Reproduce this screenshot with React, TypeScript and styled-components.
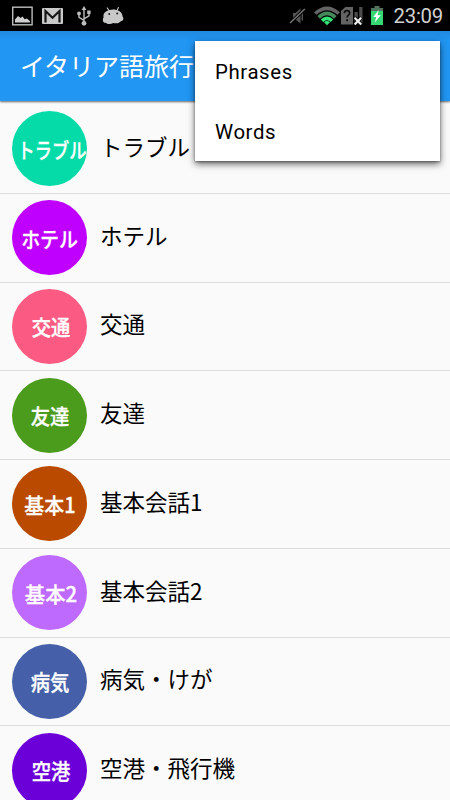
import React from 'react';
import styled, { createGlobalStyle } from 'styled-components';

const GlobalStyle = createGlobalStyle`
  * { box-sizing: border-box; }
  html, body { margin: 0; height: 800px; overflow: hidden; background: #fafafa; }
`;

const Screen = styled.div`
  position: relative;
  display: flex;
  flex-direction: column;
  width: 450px;
  height: 800px;
  overflow: hidden;
  background: #fafafa;
  color: #000;
  font-family: Roboto, 'Noto Sans CJK JP', sans-serif;
`;

const StatusBar = styled.header`
  display: flex;
  flex: none;
  justify-content: space-between;
  height: 31px;
  padding: 0 7px 0 12px;
  background: #000;
`;

const StatusGroup = styled.div`
  display: flex;
  align-items: center;
`;

const StatusIcon = styled.svg<{ $gap?: number }>`
  display: block;
  flex: none;
  margin-right: ${(p) => p.$gap ?? 0}px;
`;

const Clock = styled.time`
  padding-top: 2px;
  color: #d2d2d2;
  font-size: 20.3px;
  line-height: 31px;
  letter-spacing: -0.2px;
`;

const AppBar = styled.div`
  position: relative;
  display: flex;
  flex: none;
  align-items: center;
  height: 70px;
  padding: 0 0 3px 20px;
  background: linear-gradient(#2289df, #2196f3 10px);
  box-shadow: 0 1px 2px rgba(0, 0, 0, 0.6);
`;

const Title = styled.h1`
  margin: 0;
  color: #fff;
  font-family: 'Noto Sans CJK JP', sans-serif;
  font-size: 25px;
  font-weight: 400;
  line-height: 36px;
  white-space: nowrap;
`;

const List = styled.ul`
  flex: none;
  margin: 0;
  padding: 4px 0 0;
  list-style: none;
`;

const Row = styled.li`
  display: flex;
  align-items: center;
  height: 88.75px;
  padding: 0 12px;
  border-bottom: 1px solid #dcdcdc;
`;

const Badge = styled.div<{ $color: string }>`
  display: flex;
  flex: none;
  align-items: center;
  justify-content: center;
  width: 75px;
  height: 75px;
  margin-right: 13px;
  border-radius: 50%;
  background: ${(p) => p.$color};
`;

const BadgeLabel = styled.span<{ $stretch: number; $shift: number }>`
  color: #fff;
  font-family: 'Noto Sans CJK JP', sans-serif;
  font-size: 21px;
  font-weight: 500;
  line-height: 24px;
  white-space: nowrap;
  -webkit-text-stroke: 0.3px #fff;
  transform: translate(${(p) => p.$shift}px, 0) scaleX(${(p) => p.$stretch});
`;

const RowLabel = styled.span`
  padding-bottom: 6px;
  font-family: 'Noto Sans CJK JP', sans-serif;
  font-size: 22.5px;
  line-height: 32px;
  white-space: nowrap;
`;

const Menu = styled.div`
  position: absolute;
  top: 41px;
  left: 195px;
  width: 245px;
  height: 120px;
  background: #fff;
  box-shadow: 0 3px 7px rgba(0, 0, 0, 0.6), 0 1px 2px rgba(0, 0, 0, 0.35);
`;

const MenuItem = styled.div`
  display: flex;
  align-items: center;
  height: 60px;
  padding: 2px 20px 0;
  font-size: 20.4px;
  letter-spacing: 0.6px;
`;

type Category = { badge: string; label: string; color: string; stretch: number; shift?: number };

const categories: Category[] = [
  { badge: 'トラブル', label: 'トラブル', color: '#04dba8', stretch: 0.82, shift: 2 },
  { badge: 'ホテル', label: 'ホテル', color: '#bf00ff', stretch: 0.9 },
  { badge: '交通', label: '交通', color: '#fb5b82', stretch: 0.92, shift: 1 },
  { badge: '友達', label: '友達', color: '#4b9b1d', stretch: 0.92 },
  { badge: '基本1', label: '基本会話1', color: '#b94a00', stretch: 0.95 },
  { badge: '基本2', label: '基本会話2', color: '#bf6aff', stretch: 0.97, shift: 1 },
  { badge: '病気', label: '病気・けが', color: '#4560a8', stretch: 0.92 },
  { badge: '空港', label: '空港・飛行機', color: '#6c00d8', stretch: 0.92, shift: 1 },
];

function PictureIcon() {
  return (
    <StatusIcon $gap={9} width="21" height="20" viewBox="0 0 21 20">
      <rect x="0.7" y="1.2" width="19.4" height="17.6" fill="none" stroke="#bdbdbd" strokeWidth="1.4" />
      <path d="M3 16.5v-3l3-3.4 2.5 2 2-1.5 2.2 2.6 2.2-.6 3 2.5v1.4z" fill="#cfcfcf" />
    </StatusIcon>
  );
}

function MailIcon() {
  return (
    <StatusIcon $gap={14} width="21" height="16" viewBox="0 0 21 16">
      <rect width="21" height="16" rx="1" fill="#c9c9c9" />
      <path d="M3.5 14.5V3l7 6.7 7-6.7v11.5" fill="none" stroke="#161616" strokeWidth="2.2" />
    </StatusIcon>
  );
}

function UsbIcon() {
  return (
    <StatusIcon $gap={11} width="14" height="20" viewBox="0 0 14 20">
      <g fill="none" stroke="#bdbdbd" strokeWidth="1.4">
        <path d="M7 3v14M2 8v3.3l5 3M12 6.5v3.3l-5 3" />
      </g>
      <path d="M7 0l2.4 4H4.6zM10.2 4.5h3.4V8h-3.4z" fill="#bdbdbd" />
      <circle cx="2" cy="7.4" r="1.9" fill="#bdbdbd" />
      <circle cx="7" cy="17.3" r="2.4" fill="#bdbdbd" />
    </StatusIcon>
  );
}

function AndroidIcon() {
  return (
    <StatusIcon width="22" height="18" viewBox="0 0 22 18">
      <path d="M5.3 1l2 3M16.3 0.6l-1.2 3" stroke="#c2c2c2" strokeWidth="1.2" strokeLinecap="round" />
      <path d="M1.6 10.5C.4 5 6 2.5 11 2.4c5 0 9.4 2.6 9.6 7 1.4 1.4.8 5-1.5 4.6-2 2.6-5 2.6-7.8 2-2.6 1.6-6 1.2-7.7-.2-2.2.8-3.8-3-2-5.3z" fill="#c8c8c8" />
      <circle cx="7.2" cy="7" r="1" fill="#222" />
      <circle cx="15.2" cy="6.6" r="1" fill="#222" />
    </StatusIcon>
  );
}

function MutedIcon() {
  return (
    <StatusIcon $gap={8} width="17" height="18" viewBox="0 0 17 18">
      <path d="M4 6h2.5L11.5 1.5v15L6.5 12.5H4z" fill="#565656" />
      <path d="M13.3 4.5v9" stroke="#565656" strokeWidth="1.4" />
      <path d="M15.8 2L1 16" stroke="#000" strokeWidth="3.2" />
      <path d="M15.8 2L1 16" stroke="#777" strokeWidth="1.4" />
    </StatusIcon>
  );
}

function WifiIcon() {
  return (
    <StatusIcon $gap={1} width="26" height="20" viewBox="0 0 26 20">
      <g fill="none" strokeWidth="3.6">
        <path d="M1.3 7.5Q13-2.8 24.7 7.5" stroke="#646464" />
        <path d="M4.7 11.4Q13 3.5 21.3 11.4" stroke="#45895d" />
        <path d="M8 14.8Q13 9.8 18 14.8" stroke="#35e477" />
      </g>
      <path d="M10 16.2Q13 13.8 16 16.2L13 19.3z" fill="#35e477" />
    </StatusIcon>
  );
}

function SimIcon() {
  return (
    <StatusIcon $gap={8} width="22" height="20" viewBox="0 0 22 20">
      <path d="M0 5l4.5-4H12v17.5H0z" fill="#646464" />
      <path d="M3.3 7.2Q3.4 4.7 6 4.7t2.7 2.4c0 2-2.6 2-2.6 4.3M6.1 13.3v2" fill="none" stroke="#111" strokeWidth="1.8" />
      <path d="M13.5 6h3.3v12h-3.3zM18.2 1h3.3v17h-3.3z" fill="#4c4c4c" />
      <path d="M13.6 11.6l6.8 7M20.4 11.6l-6.8 7" stroke="#000" strokeWidth="3.6" />
      <path d="M13.6 11.8l6.6 6.8M20.2 11.8l-6.6 6.8" stroke="#eee" strokeWidth="2.2" />
    </StatusIcon>
  );
}

function BatteryIcon() {
  return (
    <StatusIcon $gap={10} width="12" height="21" viewBox="0 0 12 21">
      <path d="M3.5 1h5v2H12v4H0V3h3.5z" fill="#527260" />
      <path d="M0 6h12v14H0z" fill="#35d873" />
      <path d="M7.8 5L2.2 12h3l-1.4 5.5 6-7.3H6.6z" fill="#fff" />
    </StatusIcon>
  );
}

export default function App() {
  return (
    <Screen>
      <GlobalStyle />
      <StatusBar>
        <StatusGroup>
          <PictureIcon />
          <MailIcon />
          <UsbIcon />
          <AndroidIcon />
        </StatusGroup>
        <StatusGroup>
          <MutedIcon />
          <WifiIcon />
          <SimIcon />
          <BatteryIcon />
          <Clock>23:09</Clock>
        </StatusGroup>
      </StatusBar>
      <AppBar>
        <Title>イタリア語旅行</Title>
      </AppBar>
      <List>
        {categories.map((c) => (
          <Row key={c.label}>
            <Badge $color={c.color}>
              <BadgeLabel $stretch={c.stretch} $shift={c.shift ?? 0}>{c.badge}</BadgeLabel>
            </Badge>
            <RowLabel>{c.label}</RowLabel>
          </Row>
        ))}
      </List>
      <Menu role="menu">
        <MenuItem role="menuitem">Phrases</MenuItem>
        <MenuItem role="menuitem">Words</MenuItem>
      </Menu>
    </Screen>
  );
}
